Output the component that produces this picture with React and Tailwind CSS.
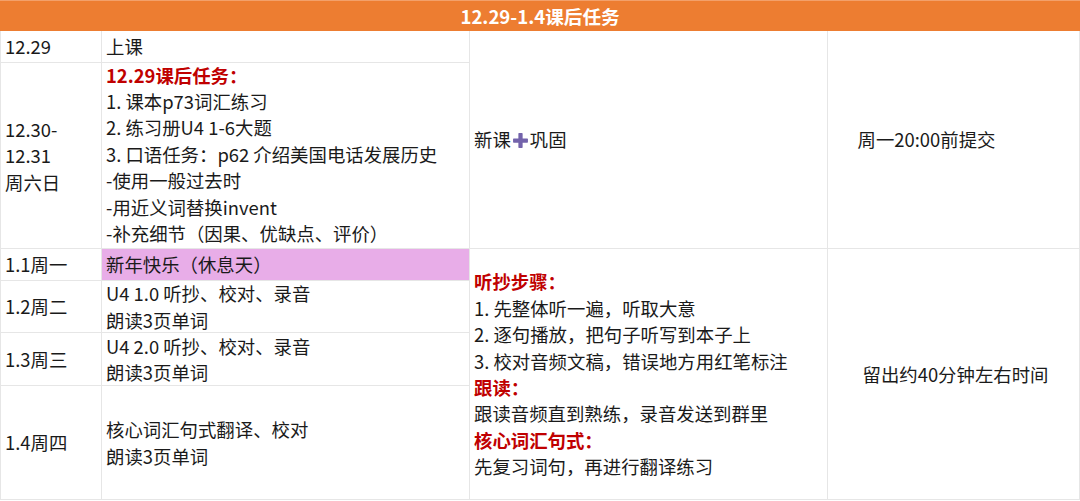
import React from "react";

const F = { fontFamily: '"Noto Sans CJK SC", "Noto Sans", sans-serif' };

function Plus() {
  return (
    <svg width="17" height="17" viewBox="0 0 16 16" className="inline-block align-[-2px] mx-[1px]">
      <rect x="6" y="1" width="4" height="14" rx="0.6" fill="#7363ab" />
      <rect x="1" y="6" width="14" height="4" rx="0.6" fill="#7363ab" />
    </svg>
  );
}

const cell = "bg-white flex flex-col justify-center pl-[4px] text-[18.4px] leading-[26.4px] text-[#1a1a1a]";
const red = "text-[#c00000] font-bold";

export default function App() {
  return (
    <div style={F} className="w-[1080px] h-[501px] bg-white overflow-hidden">
      <div className="h-[31px] bg-[#ed7d31] border-t border-[#f3a06a] flex items-center justify-center text-white font-bold text-[18.6px]">
        12.29-1.4课后任务
      </div>
      <div className="grid grid-cols-[100px_367px_357px_251px] grid-rows-[31px_185px_31px_51px_52px_113px] gap-px bg-[#e6e6e6] px-px pb-px">
        <div className={cell + " col-start-1 row-start-1"}>12.29</div>
        <div className={cell + " col-start-2 row-start-1"}>上课</div>
        <div className={cell + " col-start-3 row-start-1 row-span-2"}>
          <div>新课<Plus />巩固</div>
        </div>
        <div className={cell + " col-start-4 row-start-1 row-span-2 items-center pl-0 pr-[58px]"}>周一20:00前提交</div>

        <div className={cell + " col-start-1 row-start-2"}>
          <div>12.30-</div>
          <div>12.31</div>
          <div>周六日</div>
        </div>
        <div className={cell + " col-start-2 row-start-2 pb-[3px]"}>
          <div className={red}>12.29课后任务：</div>
          <div>1. 课本p73词汇练习</div>
          <div>2. 练习册U4 1-6大题</div>
          <div>3. 口语任务：p62 介绍美国电话发展历史</div>
          <div>-使用一般过去时</div>
          <div>-用近义词替换invent</div>
          <div>-补充细节（因果、优缺点、评价）</div>
        </div>

        <div className={cell + " col-start-1 row-start-3"}>1.1周一</div>
        <div className={cell + " col-start-2 row-start-3 !bg-[#e8ade8]"}>新年快乐（休息天）</div>

        <div className={cell + " col-start-3 row-start-3 row-span-4"}>
          <div className={red}>听抄步骤：</div>
          <div>1. 先整体听一遍，听取大意</div>
          <div>2. 逐句播放，把句子听写到本子上</div>
          <div>3. 校对音频文稿，错误地方用红笔标注</div>
          <div className={red}>跟读：</div>
          <div>跟读音频直到熟练，录音发送到群里</div>
          <div className={red}>核心词汇句式：</div>
          <div>先复习词句，再进行翻译练习</div>
        </div>
        <div className={cell + " col-start-4 row-start-3 row-span-4 items-center pl-0"}>留出约40分钟左右时间</div>

        <div className={cell + " col-start-1 row-start-4"}>1.2周二</div>
        <div className={cell + " col-start-2 row-start-4"}>
          <div>U4 1.0 听抄、校对、录音</div>
          <div>朗读3页单词</div>
        </div>

        <div className={cell + " col-start-1 row-start-5"}>1.3周三</div>
        <div className={cell + " col-start-2 row-start-5"}>
          <div>U4 2.0 听抄、校对、录音</div>
          <div>朗读3页单词</div>
        </div>

        <div className={cell + " col-start-1 row-start-6"}>1.4周四</div>
        <div className={cell + " col-start-2 row-start-6"}>
          <div>核心词汇句式翻译、校对</div>
          <div>朗读3页单词</div>
        </div>
      </div>
    </div>
  );
}
